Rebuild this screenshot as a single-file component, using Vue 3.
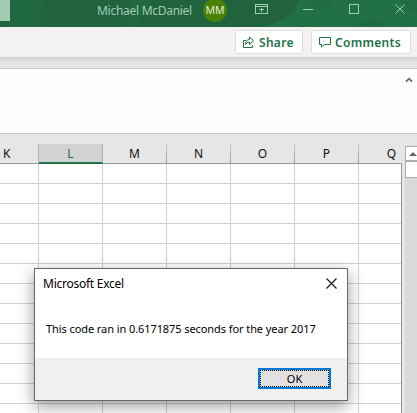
<script setup>
const columns = ['K', 'L', 'M', 'N', 'O', 'P', 'Q']
</script>

<template>
  <div class="window">
    <header class="titlebar">
      <svg class="pattern" width="417" height="27" viewBox="0 0 417 27">
        <path d="M10 0H44L39 13L43 27H8ZM130 0H153L142 11L138 27H120L133 14Z" fill="#217346" opacity=".4" />
        <path d="M299 0H417V27H262Q280 22 288 16Q297 10 299 0Z" fill="#217346" opacity=".85" />
        <path d="M311 0Q313 8 321 9Q331 8 332 0M361 27Q364 19 372 19Q381 19 384 24L383 27M400 0Q403 9 417 12V0" fill="#1f6841" opacity=".6" />
      </svg>
      <span class="search-edge"></span>
      <span class="user">Michael McDaniel</span>
      <span class="avatar">MM</span>
      <svg class="controls" width="180" height="20" viewBox="0 0 180 20" fill="none" stroke="#a0cdb3" shape-rendering="crispEdges">
        <path d="M18.500 4.500h12v9h-12zM18 6.500h13M24.500 12V8M22 9.500h5" />
        <path d="M66 9.500h10M112.500 4.500h9v9h-9z" />
        <path d="M158.500 4.500l9 9M167.500 4.500l-9 9" shape-rendering="auto" />
      </svg>
    </header>

    <div class="ribbon-tabs">
      <button class="share">
        <svg width="13" height="13" viewBox="0 0 13 13" fill="none" stroke="#217346">
          <path d="M4 4.500H1.500v7h9V9" />
          <path d="M3.500 8.500Q4 3.500 7.500 3.500V1L11.500 4.700L7.500 8.500V6Q5 6 3.500 8.500Z" />
        </svg>
        <span>Share</span>
      </button>
      <button class="comments">
        <svg width="12" height="12" viewBox="0 0 12 12" fill="none" stroke="#217346">
          <path d="M.5 1.500h11v7h-6L2.500 11V8.500h-2z" />
        </svg>
        <span>Comments</span>
      </button>
    </div>
    <div class="ribbon-shadow"></div>
    <div class="formula-bar">
      <svg width="8" height="6" viewBox="0 0 8 6" fill="none" stroke="#666" stroke-width="1.800"><path d="M1 4.700L4 1.700L7 4.700" /></svg>
    </div>

    <main class="sheet">
      <div class="sheet-body">
        <div class="headings">
          <span v-for="column in columns" :key="column" class="heading" :class="{ selected: column === 'L' }">
            <b>{{ column }}</b>
          </span>
        </div>
        <div class="cells">
          <div v-for="row in 13" :key="row" class="row">
            <i v-for="column in columns" :key="column"></i>
          </div>
        </div>
      </div>
      <aside class="scrollbar">
        <div class="scroll-up">
          <svg width="8" height="4" viewBox="0 0 8 4"><path d="M0 4L4 0L8 4Z" fill="#666" /></svg>
        </div>
        <div class="thumb"></div>
        <div class="track"></div>
      </aside>
    </main>

    <section class="dialog">
      <div class="dialog-title">
        <span>Microsoft Excel</span>
        <svg width="11" height="11" viewBox="0 0 11 11" fill="none" stroke="#111" stroke-width="1.100"><path d="M.5.5l10 10M10.500.5l-10 10" /></svg>
      </div>
      <p class="message">This code ran in 0.6171875 seconds for the year 2017</p>
      <div class="dialog-footer"><button class="ok"><span>OK</span></button></div>
    </section>
  </div>
</template>

<style>
body { margin: 0; overflow: hidden; }
</style>

<style scoped>
* { box-sizing: border-box; }
.window { position: relative; width: 417px; height: 413px; overflow: hidden; display: flex; flex-direction: column; background: #e6e6e6; font-family: "Noto Sans", "Open Sans", sans-serif; }
span, b, p { white-space: nowrap; }
button { font-family: inherit; margin: 0; padding: 0; }
svg { display: block; flex: none; }
.titlebar { position: relative; height: 27px; flex: none; display: flex; align-items: flex-start; background: #22633f; }
.pattern { position: absolute; left: 0; top: 0; }
.search-edge { position: relative; width: 10px; height: 21px; background: #a0cdb3; }
.user { position: relative; width: 106px; margin-left: 87px; color: #a0cdb3; font-size: 12px; line-height: 21px; letter-spacing: -.28px; }
.avatar { position: relative; width: 24px; height: 24px; margin-top: -2px; border-radius: 50%; background: #498205; color: #e3edda; font-size: 10.500px; line-height: 25px; text-align: center; }
.controls { position: relative; margin-left: 10px; }
.ribbon-tabs { height: 30px; flex: none; padding: 3px 6px 0 0; display: flex; justify-content: flex-end; gap: 8px; background: #f3f2f1; }
.ribbon-tabs button { height: 24px; display: flex; align-items: center; border: 1px solid #e1dfdd; border-radius: 2px; background: #fff; color: #217346; font-size: 12px; font-weight: 600; line-height: 23px; letter-spacing: .3px; }
.share { width: 68px; padding-left: 6px !important; gap: 4px; }
.comments { width: 100px; padding-left: 7px !important; gap: 4px; }
.ribbon-shadow { height: 11px; flex: none; background: linear-gradient(#d2d2d2, #e6e6e6 60%); }
.formula-bar { height: 66px; flex: none; padding: 8px 4px 0 0; display: flex; justify-content: flex-end; border-top: 1px solid #c6c6c6; border-bottom: 1px solid #c6c6c6; background: #fdfdfd; }
.sheet { height: 279px; flex: none; display: flex; padding-top: 10px; }
.sheet-body { width: 402px; overflow: hidden; flex: none; }
.headings { height: 20px; display: flex; border-bottom: 1px solid #999; }
.heading { position: relative; width: 64px; flex: none; height: 19px; color: #111; font-size: 12px; line-height: 20px; text-align: center; border-right: 1px solid; border-image: linear-gradient(#d2d2d2, #999) 1; }
.heading b { font-weight: 400; }
.heading:first-child { width: 39px; text-align: left; padding-left: 3px; border-image: none; border-right-color: #b1b1b1; }
.heading:last-child { width: 43px; text-align: right; padding-right: 6px; border: 0; }
.heading.selected { height: 20px; background: #d2d2d2; color: #217346; border-bottom: 2px solid #217346; border-right: 1px solid #b1b1b1; border-image: none; }
.cells { height: 249px; background: #fff; border-right: 1px solid #999; overflow: hidden; }
.row { height: 20px; display: flex; border-bottom: 1px solid #d0d0d0; }
.row i { width: 64px; flex: none; border-right: 1px solid #d0d0d0; }
.row i:first-child { width: 39px; }
.row i:last-child { width: 42px; border: 0; }
.scrollbar { width: 12px; margin-left: 3px; padding-top: 2px; display: flex; flex-direction: column; }
.scroll-up { height: 15px; flex: none; padding: 5px 0 0 3px; border: 1px solid #ababab; border-right: 0; background: #fff; }
.thumb { height: 17px; flex: none; border: 1px solid #ababab; border-right: 0; background: #fff; }
.track { flex: 1; background: #dadada; }
.dialog { position: absolute; left: 34px; top: 268px; width: 314px; height: 133px; display: flex; flex-direction: column; border: 1px solid #68686a; background: #fff; box-shadow: 0 5px 15px rgba(0, 0, 0, .4); color: #000; }
.dialog-title { height: 30px; flex: none; padding: 0 10px 0 8px; display: flex; align-items: center; justify-content: space-between; font-size: 12px; line-height: 30px; letter-spacing: -.25px; }
.dialog-title svg { margin-top: -2px; }
.message { height: 59px; flex: none; margin: 0; padding: 20px 0 0 11px; font-size: 11px; line-height: 20px; letter-spacing: -.08px; }
.dialog-footer { flex: 1; padding: 10px 16px 0 0; display: flex; justify-content: flex-end; background: #f0f0f0; }
.ok { width: 73px; height: 21px; padding: 0; border: 2px solid #0078d7; background: #e1e1e1; color: #000; font-size: 11px; }
.ok span { display: block; height: 17px; border: 1px dotted #000; line-height: 16px; }
</style>
